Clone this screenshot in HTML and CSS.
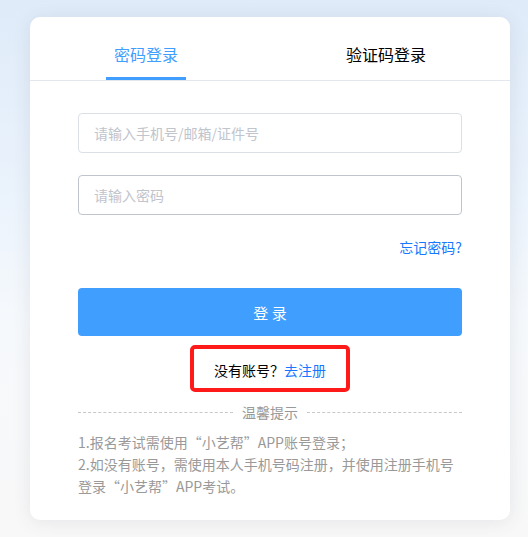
FILE: index.html
```html
<!DOCTYPE html>
<html lang="zh-CN">
<head>
<meta charset="utf-8">
<title>登录</title>
<link rel="stylesheet" href="styles.css">
</head>
<body>
<div class="page">
  <div class="card">
    <div class="tabs">
      <div class="tab active">密码登录</div>
      <div class="tab">验证码登录</div>
    </div>
    <div class="form">
      <div class="field"><input class="input" type="text" placeholder="请输入手机号/邮箱/证件号"></div>
      <div class="field"><input class="input hover" type="password" placeholder="请输入密码"></div>
      <div class="forgot-row"><a class="link">忘记密码?</a></div>
      <button class="btn">登 录</button>
      <div class="register-row">
        <div class="register-box">没有账号？<a class="link">去注册</a></div>
      </div>
      <div class="divider"><span class="line"></span><span class="divider-text">温馨提示</span><span class="line"></span></div>
      <div class="tips">
        <p>1.报名考试需使用“小艺帮”APP账号登录；</p>
        <p>2.如没有账号，需使用本人手机号码注册，并使用注册手机号登录“小艺帮”APP考试。</p>
      </div>
    </div>
  </div>
</div>
</body>
</html>
```

FILE: styles.css
```css
* { box-sizing: border-box; }
html, body {
  margin: 0;
  padding: 0;
}
body {
  font-family: "Noto Sans CJK SC", "Noto Sans", sans-serif;
  background: linear-gradient(to bottom, #dfebf9 0px, #ebf3fc 200px, #f6f9fc 320px, #f8f8f8 537px);
  min-height: 537px;
}
.page {
  padding: 17px 18px 18px 30px;
}
.card {
  width: 480px;
  background: #fff;
  border-radius: 10px;
  box-shadow: 0 2px 18px rgba(60, 70, 90, 0.10);
  padding-bottom: 23px;
}
.tabs {
  display: flex;
  justify-content: space-around;
  border-bottom: 1px solid #e4e7ed;
  height: 64px;
}
.tab {
  padding: 25px 8px 11px;
  line-height: 24px;
  font-size: 16px;
  color: #000;
  border-bottom: 3px solid transparent;
  height: 63px;
}
.tab.active {
  color: #409eff;
  border-bottom-color: #409eff;
}
.form {
  padding: 32px 48px 0;
}
.field + .field {
  margin-top: 22px;
}
.input {
  display: block;
  width: 100%;
  height: 40px;
  border: 1px solid #dcdfe6;
  border-radius: 4px;
  padding: 0 15px;
  font-family: inherit;
  font-size: 14px;
  color: #606266;
  outline: none;
  background: #fff;
}
.input.hover {
  border-color: #c0c4cc;
}
.input::placeholder {
  color: #c0c4cc;
}
.forgot-row {
  margin-top: 22px;
  text-align: right;
  line-height: 20px;
  font-size: 14px;
}
.link {
  color: #1677ff;
  text-decoration: none;
}
.btn {
  display: block;
  width: 100%;
  height: 48px;
  margin-top: 31px;
  border: none;
  border-radius: 4px;
  background: #409eff;
  color: #fff;
  font-family: inherit;
  font-size: 15px;
}
.register-row {
  margin-top: 9px;
  display: flex;
  justify-content: center;
}
.register-box {
  width: 160px;
  height: 47px;
  border: 4px solid #ff1a1a;
  border-radius: 5px;
  display: flex;
  align-items: center;
  justify-content: center;
  padding-top: 3px;
  font-size: 14px;
  color: #000;
}
.divider {
  margin-top: 10px;
  display: flex;
  align-items: center;
  line-height: 20px;
}
.line {
  flex: 1;
  border-top: 1px dashed #c8c8c8;
}
.divider-text {
  padding: 0 9px;
  font-size: 14px;
  color: #999;
}
.tips {
  margin-top: 9px;
  font-size: 14px;
  line-height: 22px;
  color: #999;
}
.tips p {
  margin: 0;
}
```
